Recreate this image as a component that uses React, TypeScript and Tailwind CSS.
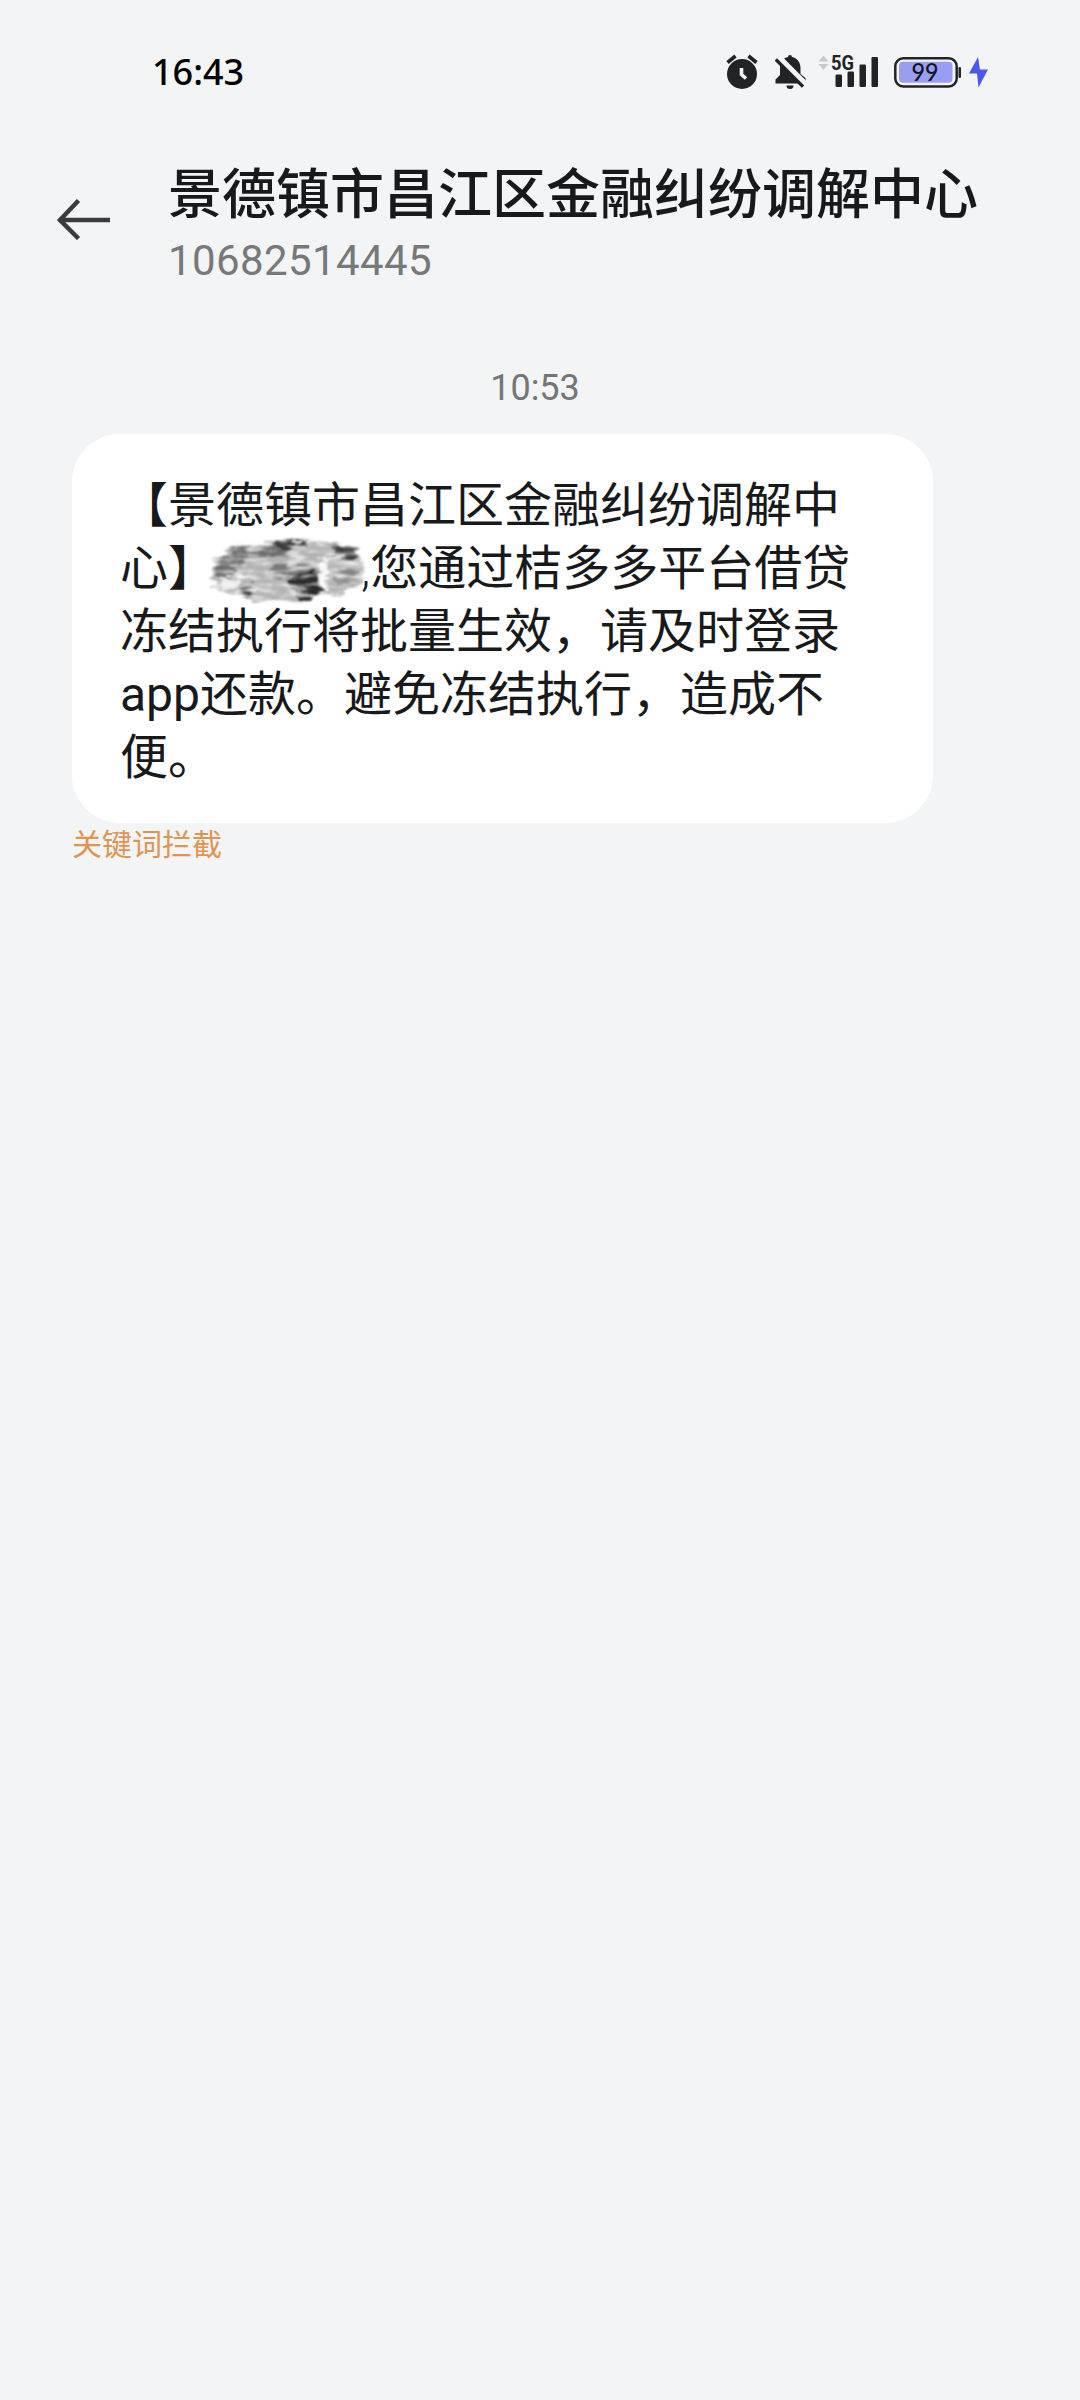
const TITLE = '景德镇市昌江区金融纠纷调解中心';

function AlarmIcon() {
  return (
    <svg width="32" height="36" viewBox="0 0 32 36" aria-label="Alarm">
      <circle cx="16" cy="20" r="15" fill="#222325" />
      <path d="M1.500 8.500 9.500 2M30.500 8.500 22.500 2" stroke="#222325" strokeWidth="3.600" />
      <path d="M15.500 14V20.500L20 24.500" fill="none" stroke="#f3f4f6" strokeWidth="3.600" />
    </svg>
  );
}

function MutedIcon() {
  return (
    <svg width="31" height="36" viewBox="0 0 31 36" aria-label="Muted">
      <path
        d="M15 1a2 2 0 0 1 2 2C22 4 25.500 8.500 25.500 14V20L30.500 24V29.500H0.500V25.500L5 21V14C5 8.500 8 4 13 3a2 2 0 0 1 2-2Z"
        fill="#222325"
      />
      <path d="M11.500 31.500h7a3.500 3.500 0 0 1-7 0Z" fill="#222325" />
      <path d="M3.500 3.500 30.500 30.500" stroke="#f3f4f6" strokeWidth="6.500" />
      <path d="M0.800 5.500 28 32.600" stroke="#222325" strokeWidth="3.300" />
    </svg>
  );
}

function SignalIcon() {
  return (
    <svg className="overflow-visible" width="62" height="36" viewBox="0 0 62 36" aria-label="5G signal">
      <path d="M5.500 1.500 10.500 7.500H0.500ZM5.500 16 0.500 10H10.500Z" fill="#c9cacc" />
      <g fill="#222325">
        <rect x="17.500" y="20.500" width="6.500" height="12.500" rx="1.200" />
        <rect x="29.500" y="17.500" width="6.500" height="15.500" rx="1.200" />
        <rect x="41.500" y="10.500" width="6.500" height="22.500" rx="1.200" />
        <rect x="53.500" y="3" width="6.500" height="30" rx="1.200" />
        <text
          x="13"
          y="15.800"
          textLength="23"
          lengthAdjust="spacingAndGlyphs"
          className="font-[Roboto,sans-serif] text-[20px] leading-none font-bold"
        >
          5G
        </text>
      </g>
    </svg>
  );
}

function BatteryIcon() {
  return (
    <svg width="96" height="36" viewBox="0 0 96 36" aria-label="Battery 99%, charging">
      <rect x="1.300" y="4.200" width="61.400" height="28.200" rx="8" fill="none" stroke="#222325" strokeWidth="2.500" />
      <rect x="5" y="7.800" width="53.500" height="21" rx="4" fill="#9a9ef2" />
      <rect x="64.500" y="13" width="2.500" height="11" rx="1.200" fill="#222325" />
      <text
        x="17.500"
        y="27"
        textLength="27"
        lengthAdjust="spacingAndGlyphs"
        fill="#101426"
        className="font-[Lato,sans-serif] text-[24px] font-medium"
      >
        99
      </text>
      <path d="M84 3 75 19.500H83L84.500 33.500 94 15.500H86L84 3Z" fill="#4a59e8" />
    </svg>
  );
}

// Brush smear that hides the recipient's name
function NameSmear() {
  return (
    <svg className="absolute -top-[3px] left-[87px]" width="164" height="72" viewBox="0 0 164 72" aria-hidden="true">
      <defs>
        <filter id="smear" x="-5%" y="-5%" width="110%" height="110%" colorInterpolationFilters="sRGB">
          <feTurbulence type="fractalNoise" baseFrequency="0.05 0.22" numOctaves="4" seed="5" result="noise" />
          <feDisplacementMap in="SourceGraphic" in2="noise" scale="16" xChannelSelector="R" yChannelSelector="A" result="shape" />
          <feColorMatrix
            in="noise"
            type="matrix"
            values="0 0 0 0 1  0 0 0 0 1  0 0 0 0 1  0 2.400 0 0 -1.050"
            result="light"
          />
          <feComposite in="light" in2="shape" operator="in" result="streaks" />
          <feMerge result="all">
            <feMergeNode in="shape" />
            <feMergeNode in="streaks" />
          </feMerge>
          <feGaussianBlur in="all" stdDeviation="1" />
        </filter>
      </defs>
      <g filter="url(#smear)">
        <path d="M4 48 8 28 20 15 50 9 90 6 126 8 150 16 156 30 154 50 134 59 104 66 50 66 22 60Z" fill="#b4b4b4" />
        <path d="M8 40 14 22 26 15 52 9 76 12 84 24 60 24 40 22 28 34 24 46Z" fill="#6e6e6e" />
        <path d="M66 7 100 5 98 13 72 15Z" fill="#303030" />
        <path d="M118 10 146 13 152 23 130 24Z" fill="#3c3c3c" />
        <path d="M62 30 106 30 110 46 84 46 64 42Z" fill="#787878" />
        <path d="M84 43 106 37 114 52 108 65 90 65 84 56Z" fill="#2a2a2a" />
        <path d="M32 54 48 50 44 62 34 62Z" fill="#383838" />
        <path d="M122 38 148 32 150 46 128 52Z" fill="#858585" />
        <path d="M110 26 121 26 120 56 113 56Z" fill="#f8f8f8" />
        <path d="M14 46 32 42 32 56 18 56Z" fill="#eeeeee" />
      </g>
    </svg>
  );
}

function StatusBar() {
  return (
    <div className="flex h-[144px] items-start pt-[54px] pr-[90px] pl-[152px]">
      <div className="-mt-px font-['Noto_Sans',sans-serif] text-[36px] leading-[38px] font-medium text-black">16:43</div>
      <div className="ml-auto flex">
        <AlarmIcon />
        <div className="ml-[17px]">
          <MutedIcon />
        </div>
        <div className="ml-[12px]">
          <SignalIcon />
        </div>
        <div className="ml-[14px]">
          <BatteryIcon />
        </div>
      </div>
    </div>
  );
}

function Header() {
  return (
    <header className="flex h-[204px] pl-[57px]">
      <svg className="mt-[54px] shrink-0" width="54" height="42" viewBox="0 0 54 42" aria-label="Back">
        <path d="M21.500 2.500 3 22 21.500 40.500M3.500 22H53" fill="none" stroke="#3a3b3d" strokeWidth="4.500" />
      </svg>
      <div className="ml-[57px]">
        <h1 className="mt-[14px] text-[54px] leading-[76px] font-medium whitespace-nowrap text-[#18191b]">{TITLE}</h1>
        <p className="mt-[2px] font-[Roboto,sans-serif] text-[42px] leading-[50px] tracking-[0.400px] text-[#77787a]">
          10682514445
        </p>
      </div>
    </header>
  );
}

export default function App() {
  return (
    <div className="h-[2400px] w-[1080px] overflow-hidden bg-[#f2f4f6] font-[Roboto,'Noto_Sans_CJK_SC',sans-serif]">
      <StatusBar />
      <Header />
      <main className="px-[72px] pt-[19px]">
        <time className="block h-[67px] pr-[10px] text-center text-[36px] leading-[42px] text-[#747577]">10:53</time>
        <div className="w-[861px] rounded-[48px] bg-white px-[48px] pt-[40px] pb-[34px] text-[48px] leading-[63px] whitespace-nowrap text-[#18191b]">
          <div>【{TITLE.slice(0, -1)}</div>
          <div className="relative">
            心】
            <NameSmear />
            <span className="ml-[145px] font-light">,</span>您通过桔多多平台借贷
          </div>
          <div>冻结执行将批量生效，请及时登录</div>
          <div>app还款。避免冻结执行，造成不</div>
          <div>便。</div>
        </div>
        <div className="mt-px text-[30px] leading-[42px] text-[#df9552]">关键词拦截</div>
      </main>
    </div>
  );
}
